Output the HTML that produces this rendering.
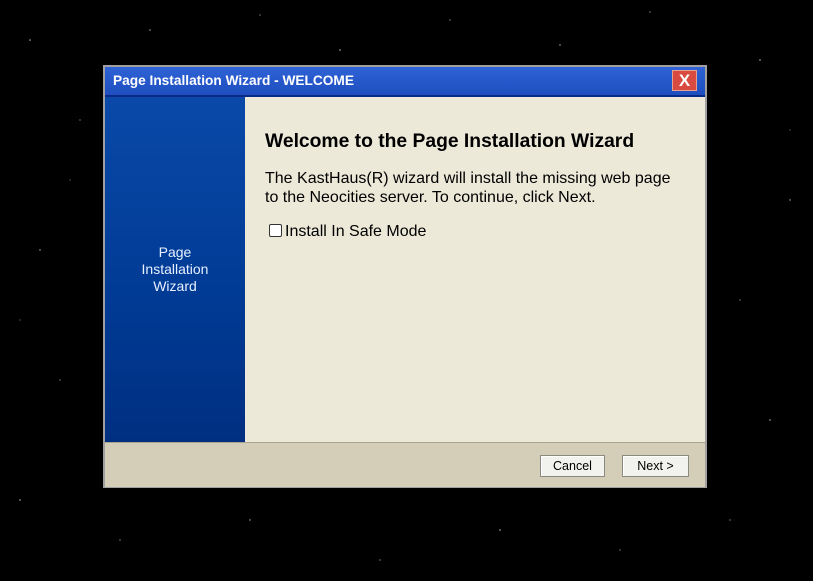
<!DOCTYPE html>
<html><head><style>
html,body{margin:0;padding:0;width:813px;height:581px;overflow:hidden;background:#000;font-family:"Liberation Sans",sans-serif;}
#stars{position:absolute;left:0;top:0}
.win{position:absolute;left:103px;top:65px;width:600px;height:419px;border:2px solid #a0a0a0;background:#ece9d8;}
.title{position:absolute;left:0;top:0;width:600px;height:30px;background:linear-gradient(#2f63d6,#2456c8 60%,#1f4fbf);border-bottom:2px solid #0a2a8a;color:#fff;font-weight:bold;font-size:13.7px;line-height:28px;box-sizing:border-box;padding-left:8px;}
.close{position:absolute;left:567px;top:3px;width:25px;height:21px;background:#d94a40;border:1px solid #e8a090;color:#fff;font-weight:bold;font-size:17px;line-height:20px;text-align:center;box-sizing:border-box;}
.side{position:absolute;left:0;top:30px;width:140px;height:345px;background:linear-gradient(#0a49a8,#003a94 60%,#002f80);color:#e8f0ff;font-size:14px;text-align:center;}
.side div{position:absolute;top:147px;width:140px;line-height:17px;}
.content{position:absolute;left:160px;top:31px;color:#000;}
h1{position:absolute;left:0;top:33px;margin:0;font-size:19.3px;white-space:nowrap;font-weight:bold;}
p{position:absolute;left:0;top:71px;margin:0;font-size:16px;line-height:19px;width:412px;}
.cb{position:absolute;left:0;top:125px;font-size:16px;white-space:nowrap;}
.cb span{display:inline-block;width:11px;height:11px;border:1px solid #333;background:#fff;margin:0 3px 0 4px;vertical-align:-1px;border-radius:2px;}
.foot{position:absolute;left:0;top:375px;width:600px;height:44px;background:#d4cdb8;border-top:1px solid #a8a290;}
.btn{position:absolute;top:12px;height:22px;background:#f2f2ee;border:1px solid #8a8a80;box-sizing:border-box;font-size:12.5px;line-height:20px;text-align:center;box-shadow:1px 1px 0 #fff inset;}
</style></head><body>
<svg id="stars" width="813" height="581">
<g fill="#fff" opacity="0.7">
<circle cx="30" cy="40" r="0.8"/><circle cx="80" cy="120" r="0.6"/><circle cx="150" cy="30" r="0.7"/><circle cx="260" cy="15" r="0.6"/><circle cx="340" cy="50" r="0.8"/><circle cx="450" cy="20" r="0.6"/><circle cx="560" cy="45" r="0.7"/><circle cx="650" cy="12" r="0.6"/><circle cx="760" cy="60" r="0.8"/><circle cx="790" cy="200" r="0.7"/><circle cx="740" cy="300" r="0.6"/><circle cx="770" cy="420" r="0.8"/><circle cx="730" cy="520" r="0.6"/><circle cx="40" cy="250" r="0.7"/><circle cx="60" cy="380" r="0.6"/><circle cx="20" cy="500" r="0.8"/><circle cx="120" cy="540" r="0.6"/><circle cx="250" cy="520" r="0.7"/><circle cx="380" cy="560" r="0.6"/><circle cx="500" cy="530" r="0.8"/><circle cx="620" cy="550" r="0.6"/><circle cx="70" cy="180" r="0.5"/><circle cx="790" cy="130" r="0.5"/><circle cx="20" cy="320" r="0.5"/>
</g></svg>
<div class="win">
<div class="title">Page Installation Wizard - WELCOME<div class="close">X</div></div>
<div class="side"><div>Page<br>Installation<br>Wizard</div></div>
<div class="content">
<h1>Welcome to the Page Installation Wizard</h1>
<p>The KastHaus(R) wizard will install the missing web page to the Neocities server. To continue, click Next.</p>
<div class="cb"><span></span>Install In Safe Mode</div>
</div>
<div class="foot">
<div class="btn" style="left:435px;width:65px;">Cancel</div>
<div class="btn" style="left:517px;width:67px;">Next &gt;</div>
</div>
</div>
</body></html>
